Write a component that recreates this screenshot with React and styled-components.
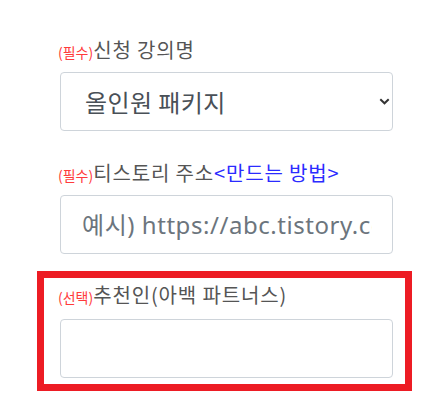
import React from 'react';
import styled, { createGlobalStyle } from 'styled-components';

const GlobalStyle = createGlobalStyle`
	html, body {
		margin: 0;
		padding: 0;
		background: #ffffff;
	}
	body {
		font-family: "Noto Sans", "Noto Sans CJK KR", sans-serif;
	}
`;

const Form = styled.form`
	width: 441px;
	height: 394px;
	box-sizing: border-box;
	padding: 36px 48px 0 60px;
	display: flex;
	flex-direction: column;
	overflow: hidden;
`;

const Group = styled.div`
	display: flex;
	flex-direction: column;
	margin-top: ${(p) => p.$gap || 0}px;
`;

const Highlight = styled.div`
	display: flex;
	flex-direction: column;
	margin: 17px -19px 0 -23px;
	padding: 3px 12px 6px 16px;
	border: 7px solid #ed1c24;
`;

const Label = styled.label`
	display: flex;
	align-items: baseline;
	height: 27px;
	line-height: 27px;
	margin: 0 0 ${(p) => p.$space || 9}px -2px;
	font-family: "Noto Sans CJK KR", sans-serif;
	font-size: 20px;
	letter-spacing: 0.85px;
	color: #555555;
	white-space: nowrap;
`;

const Tag = styled.span`
	font-size: 14px;
	letter-spacing: 0;
	color: #ff3b3b;
`;

const HowTo = styled.span`
	color: #2b2bff;
`;

const SelectWrap = styled.div`
	position: relative;
	height: 59px;
`;

const Select = styled.select`
	appearance: none;
	width: 100%;
	height: 59px;
	box-sizing: border-box;
	padding: 0 40px 0 24px;
	border: 1px solid #ced4da;
	border-radius: 4px;
	background: #ffffff;
	font-family: "Noto Sans CJK KR", sans-serif;
	font-size: 24px;
	letter-spacing: 0.4px;
	color: #495057;
	outline: none;
`;

const Chevron = styled.svg`
	position: absolute;
	right: 3px;
	top: 26px;
	width: 11px;
	height: 7px;
	pointer-events: none;
`;

const Input = styled.input`
	width: 100%;
	height: 59px;
	box-sizing: border-box;
	padding: 0 20px 0 21px;
	border: 1px solid #ced4da;
	border-radius: 4px;
	background: #ffffff;
	font-family: inherit;
	font-size: 24px;
	letter-spacing: 0.55px;
	color: #495057;
	outline: none;
	&::placeholder {
		color: #6c757d;
		opacity: 1;
	}
`;

const App = () => {
	return (
		<>
			<GlobalStyle />
			<Form onSubmit={(e) => e.preventDefault()}>
				<Group>
					<Label>
						<Tag>(필수)</Tag>신청 강의명
					</Label>
					<SelectWrap>
						<Select defaultValue="all">
							<option value="all">올인원 패키지</option>
						</Select>
						<Chevron viewBox="0 0 11 7">
							<path
								d="M1.3 1.3 L5.5 5.3 L9.7 1.3"
								fill="none"
								stroke="#333"
								strokeWidth="2"
							/>
						</Chevron>
					</SelectWrap>
				</Group>
				<Group $gap={28}>
					<Label>
						<Tag>(필수)</Tag>티스토리 주소<HowTo>&lt;만드는 방법&gt;</HowTo>
					</Label>
					<Input placeholder="예시) https://abc.tistory.com" />
				</Group>
				<Highlight>
					<Label $space={11}>
						<Tag>(선택)</Tag>추천인(아백 파트너스)
					</Label>
					<Input />
				</Highlight>
			</Form>
		</>
	);
};

export default App;
